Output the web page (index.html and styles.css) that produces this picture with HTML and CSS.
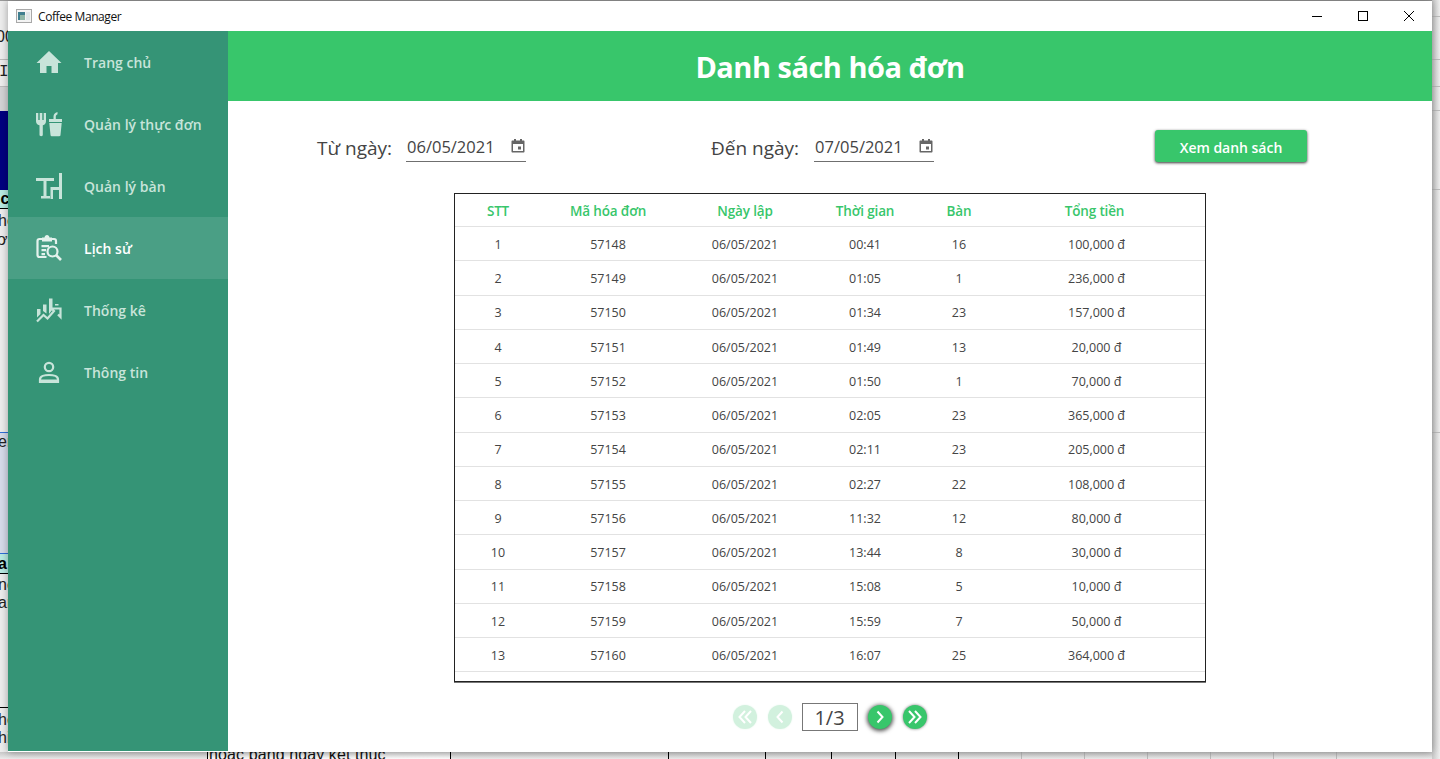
FILE: index.html
```html
<!DOCTYPE html>
<html lang="vi">
<head>
<meta charset="utf-8">
<title>Coffee Manager</title>
<link rel="stylesheet" href="styles.css">
</head>
<body>
<div class="desktop">
  <div class="bg-strip bg-top"></div>
  <div class="bg-block bg-line-a"></div>
  <div class="bg-block bg-line-b"></div>
  <div class="bg-block bg-gray"></div>
  <div class="bg-block bg-navy"></div>
  <div class="bg-block bg-teal"></div>
  <div class="bg-block bg-blue"></div>
  <div class="bg-block bg-teal2"></div>
  <div class="bg-block bg-line-c"></div>
  <div class="bg-bottom">
    <i class="v v1"></i><i class="v v2"></i><i class="v v3"></i><i class="v v4"></i><i class="v v5"></i><i class="v v6"></i><i class="v v7"></i><i class="v v8"></i><i class="v v9"></i><i class="v v10"></i><i class="v v11"></i><i class="v v12"></i><i class="v v13"></i>
  </div>
  <div class="bg-right"><i class="h h1"></i><i class="h h2"></i><i class="h h3"></i><i class="h h4"></i><i class="h h5"></i><i class="h h6"></i></div>
  <div class="bg-text t1">00</div>
  <div class="bg-text t2">I I</div>
  <div class="bg-text t3 strong">ic</div>
  <div class="bg-text t4">he</div>
  <div class="bg-text t5">ơi</div>
  <div class="bg-text t6">er</div>
  <div class="bg-text t7 strong">a</div>
  <div class="bg-text t8">ne</div>
  <div class="bg-text t9">ar</div>
  <div class="bg-text t10">he</div>
  <div class="bg-text t11">hi</div>
  <div class="bg-text t12">hoặc bằng ngày kết thúc</div>

  <div class="window">
    <div class="titlebar">
      <svg class="app-icon" width="16" height="14" viewBox="0 0 16 14"><rect x=".5" y=".5" width="15" height="13" fill="#f4f4f4" stroke="#a8a8a8"/><rect x="2" y="3" width="7" height="8" fill="#3f7f8f"/><rect x="4" y="6" width="5" height="5" fill="#8fb7a8"/><rect x="10" y="3" width="4" height="8" fill="#dfe6e8"/></svg>
      <span class="app-title">Coffee Manager</span>
      <div class="win-controls">
        <svg class="win-btn" width="46" height="30" viewBox="0 0 46 30"><path d="M18 15.500h10" stroke="#000" fill="none"/></svg>
        <svg class="win-btn" width="46" height="30" viewBox="0 0 46 30"><rect x="18.500" y="10.500" width="9" height="9" stroke="#000" fill="none"/></svg>
        <svg class="win-btn" width="46" height="30" viewBox="0 0 46 30"><path d="M18 10l10 10M28 10l-10 10" stroke="#000" fill="none"/></svg>
      </div>
    </div>
    <div class="app">
      <nav class="sidebar">
        <a class="nav-item">
          <svg class="nav-icon" viewBox="0 0 26 26"><path d="M13 2 25.500 14H22v10h-6.500v-7h-5v7H4V14H.5z"/></svg>
          <span>Trang chủ</span>
        </a>
        <a class="nav-item">
          <svg class="nav-icon" viewBox="0 0 26 26"><path d="M0 2h2.300v7h1.400V2h2.600v7h1.400V2H10v8c0 2.300-1 3.700-3.200 4.300v9.500c0 1-.6 1.400-1.600 1.400S3.500 24.800 3.500 23.800v-9.500C1 13.700 0 12.300 0 10zM13 11V8h4.500V5.500C17.500 3.300 18.800 1.800 21.500 1v2.300c-1.100.5-1.700 1.200-1.700 2.300V8H26v3zM13.300 12h12.400l-1.200 12c-.1.800-.5 1.200-1.200 1.200h-7.600c-.7 0-1.100-.4-1.200-1.200z"/></svg>
          <span>Quản lý thực đơn</span>
        </a>
        <a class="nav-item">
          <svg class="nav-icon" viewBox="0 0 26 26"><path d="M0 5h18v3h-7.500v15H14v2.500H5V23h2.500V8H0zM23 0h3v26h-3v-9h-6v9h-2.500V14H23z"/></svg>
          <span>Quản lý bàn</span>
        </a>
        <a class="nav-item active">
          <svg class="nav-icon" viewBox="0 0 26 26"><path fill="none" stroke="currentColor" stroke-width="2.200" d="M10.500 22H3.500C2.300 22 1.500 21.200 1.500 20V6C1.500 4.800 2.300 4 3.500 4H6M15 4h3c1.200 0 2 .8 2 2v3"/><path d="M6 2.500h2.500C8.800 1 9.600 0 11 0s2.200 1 2.500 2.500H16v4H6zM5.500 10h7.500v2.200H5.500zM5.500 14h4.500v2.200H5.500zM5.500 18h3.500v2.200H5.500z"/><circle cx="16.500" cy="16.500" r="5" fill="none" stroke="currentColor" stroke-width="2.200"/><path d="M20 20 25 25" stroke="currentColor" stroke-width="2.600" fill="none"/></svg>
          <span>Lịch sử</span>
        </a>
        <a class="nav-item">
          <svg class="nav-icon" viewBox="0 0 26 26"><path d="M1 12h3.500v5L1 20.500zM7 7.500h3.500v9L7 14zM13 1.500h3.500v11L13 17zM19 7h3.500v1.500H19z"/><path d="M1 24.500 7.500 18l4 3.500 6.500-7.500-2.500-2.500H24.500V20l-2.500-2.500" fill="none" stroke="currentColor" stroke-width="2.200"/></svg>
          <span>Thống kê</span>
        </a>
        <a class="nav-item">
          <svg class="nav-icon" viewBox="0 0 26 26"><circle cx="13" cy="8" r="4.200" fill="none" stroke="currentColor" stroke-width="2.200"/><path d="M4 23v-2.500C4 17.500 8.500 16 13 16s9 1.500 9 4.500V23z" fill="none" stroke="currentColor" stroke-width="2.200"/><path d="M3 20.500h20V24H3z"/></svg>
          <span>Thông tin</span>
        </a>
      </nav>
      <main class="main">
        <header class="page-header"><h1>Danh sách hóa đơn</h1></header>
        <div class="filters">
          <div class="filter filter-from">
            <label class="filter-label">Từ ngày:</label>
            <div class="date-field"><span>06/05/2021</span>
              <svg class="cal" width="14" height="14" viewBox="0 0 14 14"><path d="M3 0h2v1.500h4V0h2v1.500h1.500c.6 0 1 .4 1 1v10c0 .6-.4 1-1 1h-11c-.6 0-1-.4-1-1v-10c0-.6.4-1 1-1H3zM2 5v7h10V5z"/><rect x="7" y="7.500" width="3" height="3"/></svg>
            </div>
          </div>
          <div class="filter filter-to">
            <label class="filter-label">Đến ngày:</label>
            <div class="date-field"><span>07/05/2021</span>
              <svg class="cal" width="14" height="14" viewBox="0 0 14 14"><path d="M3 0h2v1.500h4V0h2v1.500h1.500c.6 0 1 .4 1 1v10c0 .6-.4 1-1 1h-11c-.6 0-1-.4-1-1v-10c0-.6.4-1 1-1H3zM2 5v7h10V5z"/><rect x="7" y="7.500" width="3" height="3"/></svg>
            </div>
          </div>
          <button class="view-btn">Xem danh sách</button>
        </div>
        <section class="invoices">
          <div class="row head"><span>STT</span><span>Mã hóa đơn</span><span>Ngày lập</span><span>Thời gian</span><span>Bàn</span><span class="total-head">Tổng tiền</span></div>
          <div class="row"><span>1</span><span>57148</span><span>06/05/2021</span><span>00:41</span><span>16</span><span>100,000 đ</span></div>
          <div class="row"><span>2</span><span>57149</span><span>06/05/2021</span><span>01:05</span><span>1</span><span>236,000 đ</span></div>
          <div class="row"><span>3</span><span>57150</span><span>06/05/2021</span><span>01:34</span><span>23</span><span>157,000 đ</span></div>
          <div class="row"><span>4</span><span>57151</span><span>06/05/2021</span><span>01:49</span><span>13</span><span>20,000 đ</span></div>
          <div class="row"><span>5</span><span>57152</span><span>06/05/2021</span><span>01:50</span><span>1</span><span>70,000 đ</span></div>
          <div class="row"><span>6</span><span>57153</span><span>06/05/2021</span><span>02:05</span><span>23</span><span>365,000 đ</span></div>
          <div class="row"><span>7</span><span>57154</span><span>06/05/2021</span><span>02:11</span><span>23</span><span>205,000 đ</span></div>
          <div class="row"><span>8</span><span>57155</span><span>06/05/2021</span><span>02:27</span><span>22</span><span>108,000 đ</span></div>
          <div class="row"><span>9</span><span>57156</span><span>06/05/2021</span><span>11:32</span><span>12</span><span>80,000 đ</span></div>
          <div class="row"><span>10</span><span>57157</span><span>06/05/2021</span><span>13:44</span><span>8</span><span>30,000 đ</span></div>
          <div class="row"><span>11</span><span>57158</span><span>06/05/2021</span><span>15:08</span><span>5</span><span>10,000 đ</span></div>
          <div class="row"><span>12</span><span>57159</span><span>06/05/2021</span><span>15:59</span><span>7</span><span>50,000 đ</span></div>
          <div class="row"><span>13</span><span>57160</span><span>06/05/2021</span><span>16:07</span><span>25</span><span>364,000 đ</span></div>
        </section>
        <div class="pager">
          <button class="page-btn off"><svg viewBox="0 0 24 24"><path d="M12 6 6.500 12l5.500 6M18 6l-5.500 6 5.500 6"/></svg></button>
          <button class="page-btn off"><svg viewBox="0 0 24 24"><path d="M14.500 6.500 9.500 12l5 5.500"/></svg></button>
          <div class="page-box">1/3</div>
          <button class="page-btn on focus"><svg viewBox="0 0 24 24"><path d="M9.500 6.500 14.500 12l-5 5.500"/></svg></button>
          <button class="page-btn on"><svg viewBox="0 0 24 24"><path d="M6 6l5.500 6L6 18M12 6l5.500 6-5.500 6"/></svg></button>
        </div>
      </main>
    </div>
  </div>
</div>
</body>
</html>
```
FILE: styles.css
```css
* { box-sizing: border-box; }
html, body { margin: 0; padding: 0; height: 100%; overflow: hidden; }
body { font-family: "Open Sans", "Noto Sans", "Liberation Sans", sans-serif; background: #e9e9e9; }
.desktop { position: relative; width: 1440px; height: 759px; overflow: hidden; background: #eeeeee; }

/* Things behind the app window */
.bg-strip, .bg-block, .bg-text, .bg-bottom, .bg-right { position: absolute; }
.bg-top { left: 0; right: 0; top: 0; height: 1px; background: #9a9a9a; }
.bg-block { left: 0; width: 8px; }
.bg-line-a { top: 59px; height: 1px; background: #bdbdbd; }
.bg-line-b { top: 86px; height: 1px; background: #bdbdbd; }
.bg-gray { top: 87px; height: 24px; background: #d4d4d6; }
.bg-navy { top: 111px; height: 79px; background: #000080; }
.bg-teal { top: 190px; height: 19px; background: #b9ece4; border-bottom: 1px solid #000; }
.bg-blue { top: 432px; height: 122px; background: #d7dcea; border-top: 1px solid #2f6fd8; border-bottom: 1px solid #2f6fd8; }
.bg-teal2 { top: 554px; height: 20px; background: #b9ece4; border-bottom: 1px solid #000; }
.bg-line-c { top: 707px; height: 1px; background: #000; }
.bg-text { font-family: "Liberation Sans", sans-serif; font-size: 16px; line-height: 18px; color: #222; white-space: nowrap; }
.bg-text.strong { font-weight: 700; color: #000; }
.t1 { left: -4px; top: 28px; }
.t2 { left: -1px; top: 63px; font-family: "Liberation Mono", monospace; }
.t3 { left: -4px; top: 190px; }
.t4 { left: -2px; top: 212px; }
.t5 { left: -3px; top: 231px; }
.t6 { left: -2px; top: 433px; }
.t7 { left: -2px; top: 555px; }
.t8 { left: -2px; top: 576px; }
.t9 { left: -2px; top: 594px; }
.t10 { left: -2px; top: 711px; }
.t11 { left: -2px; top: 729px; }
.t12 { left: 209px; top: 746px; color: #111; letter-spacing: .1px; }
.bg-bottom { left: 0; right: 0; top: 752px; height: 7px; background: linear-gradient(#c9c9c9, #ececec); }
.bg-bottom::before { content: ""; position: absolute; left: 207px; top: 0; width: 243px; height: 7px; background: linear-gradient(#d8d8d8, #fff); }
.v { position: absolute; top: 0; width: 1px; height: 7px; background: #bbb; }
.v1 { left: 207px; background: #000; }
.v2 { left: 450px; background: #000; }
.v3 { left: 668px; background: #000; }
.v4 { left: 765px; background: #000; }
.v5 { left: 831px; background: #000; }
.v6 { left: 895px; background: #000; }
.v7 { left: 958px; background: #000; }
.v8 { left: 1021px; }
.v9 { left: 1084px; }
.v10 { left: 1147px; }
.v11 { left: 1210px; }
.v12 { left: 1273px; }
.v13 { left: 1336px; }
.bg-right { left: 1432px; top: 0; width: 8px; height: 759px; background: linear-gradient(90deg, #c9c9c9, #efefef); }
.h { position: absolute; left: 0; width: 8px; height: 1px; background: #bdbdbd; }
.h1 { top: 16px; }
.h2 { top: 59px; }
.h3 { top: 86px; }
.h4 { top: 110px; }
.h5 { top: 189px; }
.h6 { top: 432px; }

/* App window */
.window { position: absolute; left: 8px; top: 1px; width: 1424px; height: 751px; padding-bottom: 1px; background: #fff; display: flex; flex-direction: column; box-shadow: 0 0 8px rgba(0,0,0,.35); }
.titlebar { height: 30px; flex: none; display: flex; align-items: center; background: #fff; padding-left: 8px; }
.app-icon { flex: none; }
.app-title { margin-left: 6px; font-size: 12px; color: #111; letter-spacing: -.42px; }
.win-controls { margin-left: auto; display: flex; }
.win-btn { display: block; }

.app { flex: 1; display: flex; min-height: 0; }
.sidebar { width: 220px; flex: none; background: #359476; color: #c8e4da; }
.nav-item { height: 62px; display: flex; align-items: center; padding-left: 28px; font-size: 14px; font-weight: 600; letter-spacing: .02px; color: #c8e4da; }
.nav-item span { margin-left: 22px; }
.nav-item.active { background: #4a9f85; color: #fff; }
.nav-item.active .nav-icon { color: #e4f2ed; fill: #e4f2ed; }
.nav-icon { width: 26px; height: 26px; flex: none; fill: currentColor; }

.main { flex: 1; min-width: 0; display: flex; flex-direction: column; }
.page-header { height: 70px; flex: none; background: #38c66b; display: flex; align-items: center; justify-content: center; }
.page-header h1 { margin: 0; font-size: 29px; font-weight: 700; color: #fff; letter-spacing: -.5px; }

.filters { height: 92px; flex: none; display: flex; padding: 29px 0 0 89px; align-items: flex-start; }
.filter { display: flex; align-items: flex-start; }
.filter-from { width: 394px; }
.filter-to { width: 444px; }
.filter-label { font-size: 19px; line-height: 36px; color: #444; }
.filter-from .date-field { margin-left: 14px; }
.filter-to .date-field { margin-left: 15px; }
.date-field { width: 120px; height: 32px; border-bottom: 1px solid #6f6f6f; display: flex; align-items: center; padding: 1px 0 0 1px; font-size: 16.500px; color: #444; position: relative; }
.cal { position: absolute; right: 1px; top: 9px; fill: #666; }
.view-btn { width: 152px; height: 32px; border: 0; border-radius: 3px; background: #38c66b; color: #fff; font: 600 14px "Open Sans", "Noto Sans", sans-serif; letter-spacing: -.02px; box-shadow: 0 1px 3px rgba(0,0,0,.8); padding: 2px 0 0; }

.invoices { margin-left: 226px; width: 752px; height: 489px; flex: none; border: 1px solid #222; box-shadow: 0 1px 0 #777; }
.row { height: 34.250px; display: grid; grid-template-columns: 86px 134px 140px 100px 88px 187px 15px; align-items: center; justify-items: center; padding-top: 1.500px; border-bottom: 1px solid #e2e2e2; font-size: 12.500px; color: #444; }
.row.head { height: 33px; padding-top: 1px; font-weight: 600; font-size: 13.500px; color: #38c66b; letter-spacing: -.15px; }
.total-head { margin-right: 4px; }

.pager { display: flex; align-items: center; margin-left: 499px; margin-top: 21px; }
.page-btn { width: 24px; height: 24px; border-radius: 50%; border: 0; padding: 0; background: #38c66b; margin: 0 5.500px; }
.page-btn svg { display: block; width: 24px; height: 24px; fill: none; stroke: #fff; stroke-width: 2; }
.page-btn.on { box-shadow: 0 0 3px rgba(0,0,0,.55); }
.page-btn.focus { box-shadow: 0 1px 4px 1px rgba(0,0,0,.7); }
.page-btn.off { background: #d2f1de; box-shadow: 0 0 2px #e4f6eb; }
.page-box { width: 56px; height: 28px; border: 1px solid #777; margin: 0 4.500px; display: flex; align-items: center; justify-content: center; font-size: 20px; color: #444; }
```
